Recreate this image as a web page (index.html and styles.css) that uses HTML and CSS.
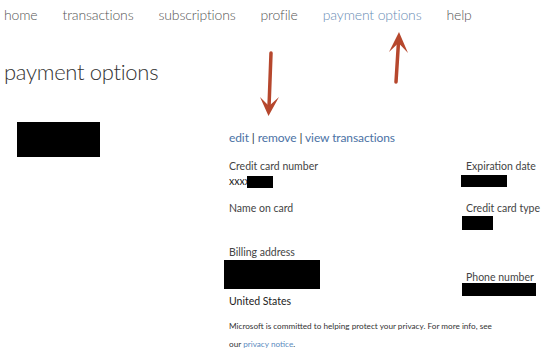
FILE: index.html
```html
<!DOCTYPE html>
<html lang="en">
<head>
<meta charset="UTF-8">
<title>payment options</title>
<link rel="stylesheet" href="styles.css">
</head>
<body>
<nav class="tabs">
    <a href="#">home</a>
    <a href="#">transactions</a>
    <a href="#">subscriptions</a>
    <a href="#">profile</a>
    <a href="#" class="active">payment options</a>
    <a href="#">help</a>
</nav>
<h1 class="title">payment options</h1>
<div class="account">
    <div class="thumb redact"></div>
    <div class="details">
        <p class="actions"><a href="#">edit</a> <span class="sep">|</span> <a href="#">remove</a> <span class="sep">|</span> <a href="#">view transactions</a></p>
        <div class="fields">
            <div class="field">
                <div class="label">Credit card number</div>
                <div class="value">xxxx<span class="redact num"></span></div>
            </div>
            <div class="field">
                <div class="label">Expiration date</div>
                <div class="value"><span class="redact exp"></span></div>
            </div>
            <div class="field">
                <div class="label">Name on card</div>
                <div class="value"></div>
            </div>
            <div class="field">
                <div class="label">Credit card type</div>
                <div class="value"><span class="redact type"></span></div>
            </div>
            <div class="field billing">
                <div class="label">Billing address</div>
                <div class="redact addr"></div>
                <div class="value">United States</div>
            </div>
            <div class="field phone">
                <div class="label">Phone number</div>
                <div class="redact tel"></div>
            </div>
        </div>
        <p class="privacy">Microsoft is committed to helping protect your privacy. For more info, see<br>our <a href="#">privacy notice</a>.</p>
    </div>
</div>
<!-- hand-drawn markers over the page -->
<svg class="arrow arrow-up" width="28" height="58" viewBox="0 0 28 58">
    <path d="M14.5 14 L12 54" stroke="#b6472d" stroke-width="3.5" stroke-linecap="round" fill="none"/>
    <path d="M15 4 L5 24 L14.5 15 L24 25 Z" fill="#b6472d"/>
</svg>
<svg class="arrow arrow-down" width="28" height="70" viewBox="0 0 28 70">
    <path d="M15 3 L13 57" stroke="#b6472d" stroke-width="3.5" stroke-linecap="round" fill="none"/>
    <path d="M12.5 66 L4 47 L13 56 L23 47 Z" fill="#b6472d"/>
</svg>
</body>
</html>
```

FILE: styles.css
```css
body {
    margin: 0;
    font-family: Lato, "Open Sans", sans-serif;
    color: #333;
    background: #fff;
    position: relative;
    width: 550px;
    height: 362px;
    overflow: hidden;
}
a {
    text-decoration: none;
}
.tabs {
    display: flex;
    gap: 25px;
    padding: 4px 0 0 4px;
}
.tabs a {
    font-size: 14px;
    font-weight: 300;
    letter-spacing: -0.15px;
    line-height: 22px;
    color: #555;
}
.tabs .active {
    color: #6a8db5;
}
.title {
    margin: 31px 0 0 4px;
    font-size: 22px;
    font-weight: 300;
    letter-spacing: -0.3px;
    line-height: 30px;
    color: #333;
}
.account {
    display: flex;
    margin-top: 35px;
}
.redact {
    background: #000;
}
.thumb {
    width: 83px;
    height: 35px;
    margin: 0 129px 0 17px;
}
.details {
    width: 320px;
}
.actions {
    margin: 8px 0 0;
    font-size: 12px;
    line-height: 16px;
    letter-spacing: -0.1px;
    color: #333;
}
.actions a {
    color: #4b72a5;
}
.fields {
    display: grid;
    grid-template-columns: 237px 1fr;
    margin-top: 13px;
}
.field {
    margin-bottom: 12px;
}
.label {
    font-size: 10.5px;
    line-height: 15px;
    color: #444;
}
.value {
    display: flex;
    align-items: center;
    min-height: 14px;
    font-size: 10.5px;
    line-height: 15px;
    color: #222;
}
.num {
    width: 26px;
    height: 12px;
    margin-left: -3px;
}
.exp {
    width: 46px;
    height: 12px;
    margin-left: -5px;
}
.type {
    width: 31px;
    height: 14px;
    margin-left: -4px;
}
.billing {
    padding-top: 3px;
}
.addr {
    width: 96px;
    height: 29px;
    margin: 0 0 5px -5px;
}
.phone {
    padding-top: 28px;
}
.tel {
    width: 74px;
    height: 13px;
    margin: -2px 0 0 -4px;
}
.privacy {
    margin: -4px 0 0;
    font-size: 8.2px;
    line-height: 18px;
    color: #333;
}
.privacy a {
    color: #5b8cc0;
}
.arrow {
    position: absolute;
}
.arrow-up {
    left: 384px;
    top: 28px;
}
.arrow-down {
    left: 256px;
    top: 50px;
}
```
